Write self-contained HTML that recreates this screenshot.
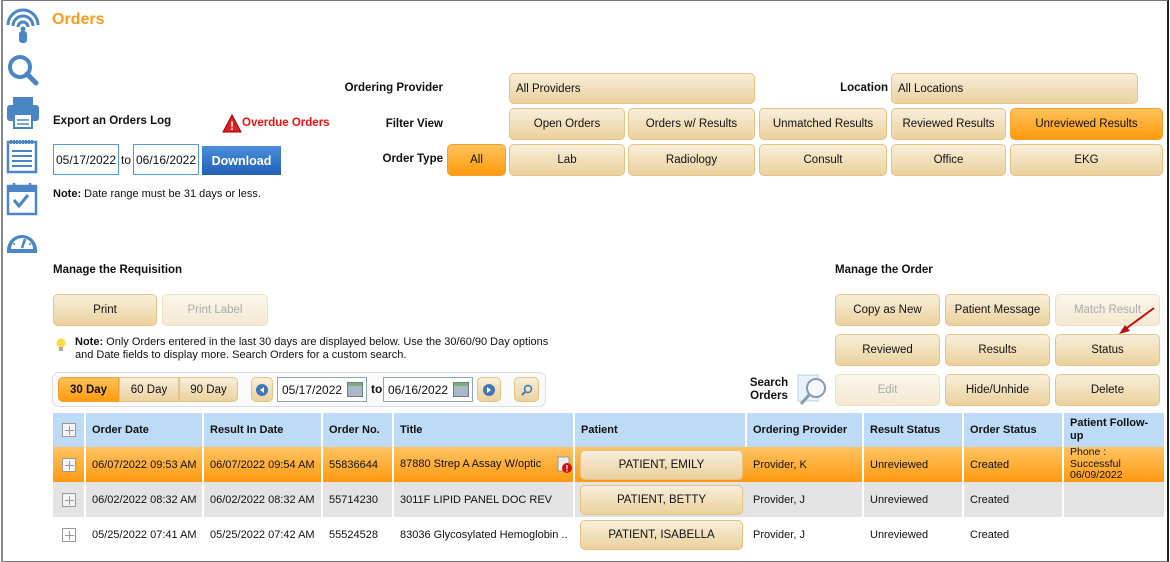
<!DOCTYPE html>
<html><head><meta charset="utf-8"><style>
*{box-sizing:border-box;margin:0;padding:0}
body{width:1170px;height:562px;position:relative;overflow:hidden;background:#fff;font-family:"Liberation Sans",Arial,sans-serif;font-size:12px;color:#111}
.a{position:absolute}
.frame{left:1px;top:0;width:1168px;height:562px;border-top:1px solid #777;border-left:2px solid #888;border-right:2px solid #222;border-bottom:1px solid #777}
.b{position:absolute;display:flex;align-items:center;justify-content:center;background:linear-gradient(#f8eedb,#ebd19d);border:1px solid #e3c386;border-radius:5px;color:#111;font-size:11.5px;white-space:nowrap}
.o{background:linear-gradient(#ffc25a,#ff9a0c);border-color:#f0a030}
.d{background:linear-gradient(#fbf6ec,#f4e8d2);border-color:#efdfc0;color:#aaa}
.lb{position:absolute;font-weight:bold;font-size:11.5px;text-align:right}
.in{position:absolute;border:1px solid #5a97d6;background:#fff;display:flex;align-items:center;justify-content:center;font-size:12px}
.cell{position:absolute;display:flex;align-items:center;padding-left:6px;font-size:11px;border-right:2px solid #fff;white-space:nowrap;overflow:hidden}
.plus{position:absolute;width:14px;height:14px;border:1px solid #999;background:#f4f4f4}
.plus:before{content:"";position:absolute;left:6px;top:2px;width:1px;height:9px;background:#999}
.plus:after{content:"";position:absolute;left:2px;top:6px;width:9px;height:1px;background:#999}
</style></head><body>
<div class="a frame"></div>

<svg class="a" style="left:4px;top:8px" width="38" height="250" viewBox="0 0 38 250">
<g fill="none" stroke="#4a86c6" stroke-width="3">
<path d="M4 17a15 15 0 0 1 30 0"/><path d="M9 18a10 10 0 0 1 20 0"/><path d="M14 19a5 5 0 0 1 10 0"/>
</g>
<rect x="15" y="23" width="8" height="12" rx="3" fill="#4a86c6"/><circle cx="19" cy="21" r="2.5" fill="#4a86c6"/>
<circle cx="16" cy="59" r="10" fill="none" stroke="#4a86c6" stroke-width="4"/><path d="M23 66l9 9" stroke="#4a86c6" stroke-width="5" stroke-linecap="round"/>
<rect x="9" y="89" width="20" height="10" fill="#4a86c6"/><rect x="3" y="97" width="32" height="16" rx="3" fill="#4a86c6"/><rect x="10" y="106" width="18" height="14" fill="#fff" stroke="#4a86c6" stroke-width="2"/><path d="M13 112h12M13 116h12" stroke="#4a86c6" stroke-width="1.5"/>
<rect x="4" y="134" width="28" height="30" fill="#fff" stroke="#4a86c6" stroke-width="2.5"/><path d="M8 143h20M8 148h20M8 153h20M8 158h20" stroke="#4a86c6" stroke-width="2"/><path d="M6 134h24" stroke="#4a86c6" stroke-width="4" stroke-dasharray="2 1"/>
<rect x="4" y="178" width="28" height="28" fill="#fff" stroke="#4a86c6" stroke-width="2.5"/><rect x="4" y="178" width="28" height="6" fill="#4a86c6"/><path d="M10 175v6M26 175v6" stroke="#4a86c6" stroke-width="2.5"/><path d="M10 192l5 6 9-11" fill="none" stroke="#4a86c6" stroke-width="3"/>
<path d="M3 242a15 15 0 0 1 30 0v3h-30z" fill="#4a86c6"/><path d="M7 241a11 11 0 0 1 22 0z" fill="#fff"/><circle cx="10" cy="236" r="1" fill="#4a86c6"/><circle cx="13" cy="230" r="1" fill="#4a86c6"/><circle cx="23" cy="230" r="1" fill="#4a86c6"/><circle cx="26" cy="236" r="1" fill="#4a86c6"/><path d="M18 240l3-9" stroke="#4a86c6" stroke-width="2.5"/>
</svg>

<div class="a" style="left:52px;top:11px;color:#ff9a1a;font-weight:bold;font-size:16px">Orders</div>

<div class="lb" style="left:53px;top:115px;text-align:left">Export an Orders Log</div>
<svg class="a" style="left:222px;top:114px" width="20" height="19"><path d="M10 1L19 18H1z" fill="#e02020" stroke="#900" stroke-width="1"/><text x="10" y="16" font-size="12" font-weight="bold" fill="#fff" text-anchor="middle" font-family="Liberation Sans">!</text></svg>
<div class="a" style="left:242px;top:117px;color:#f01010;font-weight:bold;font-size:11.5px">Overdue Orders</div>
<div class="in" style="left:53px;top:144px;width:66px;height:31px">05/17/2022</div>
<div class="a" style="left:121px;top:153px">to</div>
<div class="in" style="left:133px;top:144px;width:66px;height:31px">06/16/2022</div>
<div class="a" style="left:202px;top:146px;width:79px;height:29px;background:linear-gradient(#4b8fdc,#1f5fb5);color:#fff;font-weight:bold;font-size:12.5px;display:flex;align-items:center;justify-content:center">Download</div>
<div class="a" style="left:53px;top:188px;font-size:11px"><b>Note:</b> Date range must be 31 days or less.</div>

<div class="lb" style="left:330px;top:82px;width:113px">Ordering Provider</div>
<div class="b" style="left:509px;top:73px;width:246px;height:31px;justify-content:flex-start;padding-left:6px">All Providers</div>
<div class="lb" style="left:830px;top:82px;width:58px">Location</div>
<div class="b" style="left:891px;top:73px;width:247px;height:31px;justify-content:flex-start;padding-left:6px">All Locations</div>

<div class="lb" style="left:330px;top:118px;width:113px">Filter View</div>
<div class="b" style="left:509px;top:108px;width:116px;height:32px">Open Orders</div>
<div class="b" style="left:628px;top:108px;width:127px;height:32px">Orders w/ Results</div>
<div class="b" style="left:759px;top:108px;width:128px;height:32px">Unmatched Results</div>
<div class="b" style="left:891px;top:108px;width:115px;height:32px">Reviewed Results</div>
<div class="b o" style="left:1010px;top:108px;width:153px;height:32px">Unreviewed Results</div>

<div class="lb" style="left:330px;top:153px;width:113px">Order Type</div>
<div class="b o" style="left:447px;top:144px;width:59px;height:32px">All</div>
<div class="b" style="left:509px;top:144px;width:116px;height:32px">Lab</div>
<div class="b" style="left:628px;top:144px;width:127px;height:32px">Radiology</div>
<div class="b" style="left:759px;top:144px;width:128px;height:32px">Consult</div>
<div class="b" style="left:891px;top:144px;width:115px;height:32px">Office</div>
<div class="b" style="left:1010px;top:144px;width:153px;height:32px">EKG</div>

<div class="lb" style="left:53px;top:264px;text-align:left">Manage the Requisition</div>
<div class="lb" style="left:835px;top:264px;text-align:left">Manage the Order</div>
<div class="b" style="left:53px;top:294px;width:104px;height:32px">Print</div>
<div class="b d" style="left:162px;top:294px;width:106px;height:32px">Print Label</div>

<div class="b" style="left:835px;top:294px;width:105px;height:32px">Copy as New</div>
<div class="b" style="left:945px;top:294px;width:105px;height:32px">Patient Message</div>
<div class="b d" style="left:1055px;top:294px;width:105px;height:32px">Match Result</div>
<div class="b" style="left:835px;top:334px;width:105px;height:32px">Reviewed</div>
<div class="b" style="left:945px;top:334px;width:105px;height:32px">Results</div>
<div class="b" style="left:1055px;top:334px;width:105px;height:32px">Status</div>
<div class="b d" style="left:835px;top:374px;width:105px;height:32px">Edit</div>
<div class="b" style="left:945px;top:374px;width:105px;height:32px">Hide/Unhide</div>
<div class="b" style="left:1055px;top:374px;width:105px;height:32px">Delete</div>
<div class="lb" style="left:748px;top:377px;width:42px;text-align:center;line-height:13px">Search Orders</div>
<svg class="a" style="left:796px;top:373px" width="36" height="36"><rect x="2" y="2" width="20" height="26" fill="#e8f2fa" stroke="#b8d0e4"/><circle cx="20" cy="15" r="9" fill="#f4f8fc" stroke="#8a9aac" stroke-width="2"/><path d="M13 22l-8 9" stroke="#8a9aac" stroke-width="3"/></svg>
<svg class="a" style="left:1116px;top:306px" width="40" height="30"><path d="M38 2L8 24" stroke="#c01010" stroke-width="2"/><path d="M3 28l11-3-5-6z" fill="#c01010"/></svg>

<svg class="a" style="left:55px;top:338px" width="12" height="14"><circle cx="6" cy="5" r="4.5" fill="#ffd84a"/><rect x="4" y="9" width="4" height="4" fill="#aaa"/></svg>
<div class="a" style="left:75px;top:336px;font-size:11px;line-height:13px"><b>Note:</b> Only Orders entered in the last 30 days are displayed below. Use the 30/60/90 Day options<br>and Date fields to display more. Search Orders for a custom search.</div>

<div class="a" style="left:52px;top:372px;width:494px;height:35px;border:1px solid #ddd;border-radius:7px;background:#fafafa"></div>
<div class="b o" style="left:58px;top:377px;width:61px;height:25px;border-radius:5px 0 0 5px;font-weight:bold">30 Day</div>
<div class="b" style="left:119px;top:377px;width:60px;height:25px;border-radius:0">60 Day</div>
<div class="b" style="left:179px;top:377px;width:59px;height:25px;border-radius:0 5px 5px 0">90 Day</div>
<div class="b" style="left:251px;top:377px;width:22px;height:25px"><svg width="12" height="12"><circle cx="6" cy="6" r="6" fill="#3f77b5"/><path d="M8 3L4 6l4 3z" fill="#fff"/></svg></div>
<div class="in" style="left:277px;top:377px;width:90px;height:25px;justify-content:flex-start;padding-left:4px;border-color:#8aa">05/17/2022</div>
<div class="a" style="left:347px;top:382px;width:16px;height:15px;background:linear-gradient(#7ab070 0 25%,#a8b8c8 25%);border:1px solid #778"></div>
<div class="a" style="left:371px;top:382px;font-weight:bold">to</div>
<div class="in" style="left:383px;top:377px;width:90px;height:25px;justify-content:flex-start;padding-left:4px;border-color:#8aa">06/16/2022</div>
<div class="a" style="left:453px;top:382px;width:16px;height:15px;background:linear-gradient(#7ab070 0 25%,#a8b8c8 25%);border:1px solid #778"></div>
<div class="b" style="left:477px;top:377px;width:24px;height:25px"><svg width="12" height="12"><circle cx="6" cy="6" r="6" fill="#3f77b5"/><path d="M4 3l4 3-4 3z" fill="#fff"/></svg></div>
<div class="b" style="left:514px;top:377px;width:25px;height:25px"><svg width="12" height="12"><circle cx="7" cy="5" r="3.5" fill="none" stroke="#3f77b5" stroke-width="1.5"/><path d="M4 8l-3 3" stroke="#3f77b5" stroke-width="2"/></svg></div>

<div class="a" style="left:53px;top:413px;width:1111px;height:34px;background:#bddbf7"></div>
<div class="a" style="left:53px;top:447px;width:1111px;height:35px;background:linear-gradient(#ffc463,#ff9a10)"></div>
<div class="a" style="left:53px;top:482px;width:1111px;height:35px;background:#e3e3e3"></div>

<div class="plus" style="left:62px;top:423px"></div>
<div class="plus" style="left:62px;top:458px"></div>
<div class="plus" style="left:62px;top:493px"></div>
<div class="plus" style="left:62px;top:528px;background:#fff"></div>

<div class="cell" style="left:53px;top:413px;width:33px;height:34px"></div>
<div class="cell" style="left:86px;top:413px;width:118px;height:34px;font-weight:bold">Order Date</div>
<div class="cell" style="left:204px;top:413px;width:119px;height:34px;font-weight:bold">Result In Date</div>
<div class="cell" style="left:323px;top:413px;width:71px;height:34px;font-weight:bold">Order No.</div>
<div class="cell" style="left:394px;top:413px;width:181px;height:34px;font-weight:bold">Title</div>
<div class="cell" style="left:575px;top:413px;width:172px;height:34px;font-weight:bold">Patient</div>
<div class="cell" style="left:747px;top:413px;width:117px;height:34px;font-weight:bold">Ordering Provider</div>
<div class="cell" style="left:864px;top:413px;width:100px;height:34px;font-weight:bold">Result Status</div>
<div class="cell" style="left:964px;top:413px;width:100px;height:34px;font-weight:bold">Order Status</div>
<div class="cell" style="left:1064px;top:413px;width:100px;height:34px;font-weight:bold;line-height:13px;border:0">Patient Follow-<br>up</div>

<div class="cell" style="left:53px;top:447px;width:33px;height:35px"></div>
<div class="cell" style="left:86px;top:447px;width:118px;height:35px">06/07/2022 09:53 AM</div>
<div class="cell" style="left:204px;top:447px;width:119px;height:35px">06/07/2022 09:54 AM</div>
<div class="cell" style="left:323px;top:447px;width:71px;height:35px">55836644</div>
<div class="cell" style="left:394px;top:447px;width:181px;height:35px;align-items:flex-start;padding-top:11px">87880 Strep A Assay W/optic</div>
<svg class="a" style="left:557px;top:456px" width="16" height="18"><rect x="1" y="1" width="11" height="14" fill="#eee" stroke="#999"/><circle cx="10" cy="12" r="5" fill="#d01010"/><text x="10" y="15.5" font-size="9" fill="#fff" text-anchor="middle" font-weight="bold" font-family="Liberation Sans">!</text></svg>
<div class="cell" style="left:747px;top:447px;width:117px;height:35px">Provider, K</div>
<div class="cell" style="left:864px;top:447px;width:100px;height:35px">Unreviewed</div>
<div class="cell" style="left:964px;top:447px;width:100px;height:35px">Created</div>
<div class="cell" style="left:1064px;top:447px;width:100px;height:35px;font-size:10.5px;line-height:11.5px;border:0">Phone :<br>Successful<br>06/09/2022</div>

<div class="cell" style="left:53px;top:482px;width:33px;height:35px"></div>
<div class="cell" style="left:86px;top:482px;width:118px;height:35px">06/02/2022 08:32 AM</div>
<div class="cell" style="left:204px;top:482px;width:119px;height:35px">06/02/2022 08:32 AM</div>
<div class="cell" style="left:323px;top:482px;width:71px;height:35px">55714230</div>
<div class="cell" style="left:394px;top:482px;width:181px;height:35px">3011F LIPID PANEL DOC REV</div>
<div class="cell" style="left:747px;top:482px;width:117px;height:35px">Provider, J</div>
<div class="cell" style="left:864px;top:482px;width:100px;height:35px">Unreviewed</div>
<div class="cell" style="left:964px;top:482px;width:100px;height:35px">Created</div>

<div class="cell" style="left:86px;top:517px;width:118px;height:36px">05/25/2022 07:41 AM</div>
<div class="cell" style="left:204px;top:517px;width:119px;height:36px">05/25/2022 07:42 AM</div>
<div class="cell" style="left:323px;top:517px;width:71px;height:36px">55524528</div>
<div class="cell" style="left:394px;top:517px;width:181px;height:36px">83036 Glycosylated Hemoglobin ..</div>
<div class="cell" style="left:747px;top:517px;width:117px;height:36px">Provider, J</div>
<div class="cell" style="left:864px;top:517px;width:100px;height:36px">Unreviewed</div>
<div class="cell" style="left:964px;top:517px;width:100px;height:36px">Created</div>

<div class="b" style="left:580px;top:450px;width:163px;height:30px">PATIENT, EMILY</div>
<div class="b" style="left:580px;top:485px;width:163px;height:30px">PATIENT, BETTY</div>
<div class="b" style="left:580px;top:520px;width:163px;height:30px">PATIENT, ISABELLA</div>
</body></html>
